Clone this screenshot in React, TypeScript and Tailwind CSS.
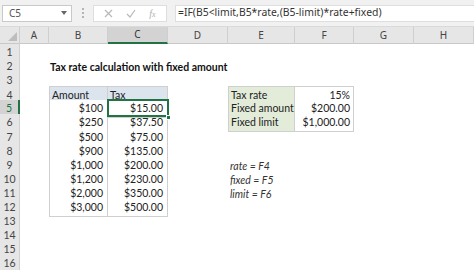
import React from "react";

const GRID = "grid grid-cols-[20px_29px_59px_60px_60px_67px_59px_60px_60px]";
const CELL_FONT = { fontFamily: "Lato, 'Noto Sans', sans-serif" };
const UI_FONT = { fontFamily: "'Noto Sans', 'Open Sans', sans-serif" };

type Cell = {
  text?: string;
  kind?: "title" | "head" | "num" | "label" | "val" | "italic" | "sel";
  border?: "t1top" | "t1" | "t2top" | "t2";
  left?: boolean;
};

const rows: Record<number, Record<string, Cell>> = {
  2: { B: { text: "Tax rate calculation with fixed amount", kind: "title" } },
  4: {
    B: { text: "Amount", kind: "head", border: "t1top", left: true },
    C: { text: "Tax", kind: "head", border: "t1top" },
    E: { text: "Tax rate", kind: "label", border: "t2top", left: true },
    F: { text: "15%", kind: "val", border: "t2top" },
  },
  5: {
    B: { text: "$100", kind: "num", border: "t1", left: true },
    C: { text: "$15.00", kind: "sel", border: "t1" },
    E: { text: "Fixed amount", kind: "label", border: "t2", left: true },
    F: { text: "$200.00", kind: "val", border: "t2" },
  },
  6: {
    B: { text: "$250", kind: "num", border: "t1", left: true },
    C: { text: "$37.50", kind: "num", border: "t1" },
    E: { text: "Fixed limit", kind: "label", border: "t2", left: true },
    F: { text: "$1,000.00", kind: "val", border: "t2" },
  },
  7: { B: { text: "$500", kind: "num", border: "t1", left: true }, C: { text: "$75.00", kind: "num", border: "t1" } },
  8: { B: { text: "$900", kind: "num", border: "t1", left: true }, C: { text: "$135.00", kind: "num", border: "t1" } },
  9: {
    B: { text: "$1,000", kind: "num", border: "t1", left: true },
    C: { text: "$200.00", kind: "num", border: "t1" },
    E: { text: "rate = F4", kind: "italic" },
  },
  10: {
    B: { text: "$1,200", kind: "num", border: "t1", left: true },
    C: { text: "$230.00", kind: "num", border: "t1" },
    E: { text: "fixed = F5", kind: "italic" },
  },
  11: {
    B: { text: "$2,000", kind: "num", border: "t1", left: true },
    C: { text: "$350.00", kind: "num", border: "t1" },
    E: { text: "limit = F6", kind: "italic" },
  },
  12: { B: { text: "$3,000", kind: "num", border: "t1", left: true }, C: { text: "$500.00", kind: "num", border: "t1" } },
};

const letters = ["A", "B", "C", "D", "E", "F", "G", "H"];

function CellView({ cell }: { cell?: Cell }) {
  if (!cell) return <div className="h-full" />;
  let border = "";
  if (cell.border === "t1top" || cell.border === "t2top") border = "border-t border-r border-b border-[#cfcfcf]";
  else if (cell.border === "t1" || cell.border === "t2") border = "border-r border-b border-[#cfcfcf]";
  const left = cell.left ? "border-l" : "";
  switch (cell.kind) {
    case "title":
      return (
        <div className="relative h-full">
          <span className="absolute left-[1px] top-[1px] h-full flex items-center whitespace-nowrap font-bold text-[10.5px] text-[#111]">
            {cell.text}
          </span>
        </div>
      );
    case "head":
      return (
        <div className={`h-full flex items-center pl-[2px] pt-[1px] bg-[#dce4ee] text-[10.5px] text-[#222] ${border} ${left}`}>{cell.text}</div>
      );
    case "label":
      return (
        <div className={`h-full flex items-center pl-[2px] pt-[1px] bg-[#e2ecd9] text-[10.5px] text-[#222] whitespace-nowrap ${border} ${left}`}>{cell.text}</div>
      );
    case "val":
      return (
        <div className={`h-full flex items-center justify-end pr-[3px] pt-[1px] bg-white text-[10.5px] text-[#222] whitespace-nowrap ${border}`}>{cell.text}</div>
      );
    case "num":
      return (
        <div className={`h-full flex items-center justify-end pr-[4px] pt-[1px] bg-white text-[10.5px] text-[#222] ${border} ${left}`}>{cell.text}</div>
      );
    case "sel":
      return (
        <div className={`relative h-full flex items-center justify-end pr-[4px] pt-[1px] bg-white text-[10.5px] text-[#222] ${border}`}>
          {cell.text}
          <div className="absolute left-[-1px] top-[-1px] right-[-2px] bottom-0 border-2 border-[#217346]" />
          <div className="absolute right-[-4px] bottom-[-3px] w-[5px] h-[5px] bg-[#217346] border border-white" />
        </div>
      );
    case "italic":
      return (
        <div className="relative h-full">
          <span className="absolute left-[2px] top-[1px] h-full flex items-center whitespace-nowrap italic text-[10.5px] text-[#333]">
            {cell.text}
          </span>
        </div>
      );
  }
  return <div className="h-full" />;
}

export default function App() {
  const rowNums = Array.from({ length: 16 }, (_, i) => i + 1);
  return (
    <div className="w-[474px] h-[270px] overflow-hidden bg-white flex flex-col">
      {/* Formula toolbar */}
      <div className="h-[27px] shrink-0 bg-[#f1f1f1] flex items-center pl-[2px] border-b border-[#dadada]" style={UI_FONT}>
        <div className="w-[70px] h-[17px] bg-white border border-[#c9c9c9] flex items-center justify-between pl-[6px] pr-[4px]">
          <span className="text-[10px] text-[#555]">C5</span>
          <svg width="6" height="4" viewBox="0 0 6 4"><path d="M0 0 L6 0 L3 4 Z" fill="#666" /></svg>
        </div>
        <div className="w-[21px] flex justify-center">
          <svg width="2" height="10" viewBox="0 0 2 10">
            <rect x="0" y="0" width="2" height="2" fill="#b4b4b4" />
            <rect x="0" y="4" width="2" height="2" fill="#b4b4b4" />
            <rect x="0" y="8" width="2" height="2" fill="#b4b4b4" />
          </svg>
        </div>
        <div className="w-[74px] h-[17px] bg-white border border-[#dedede] flex items-center justify-around px-[4px]">
          <svg width="9" height="9" viewBox="0 0 9 9"><path d="M1 1 L8 8 M8 1 L1 8" stroke="#b8b8b8" strokeWidth="1.2" /></svg>
          <svg width="10" height="9" viewBox="0 0 10 9"><path d="M1 5 L4 8 L9 1" stroke="#b8b8b8" strokeWidth="1.2" fill="none" /></svg>
          <span className="italic text-[10px] text-[#b0b0b0]" style={{ fontFamily: "'Liberation Serif', serif" }}>f<span className="text-[8px]">x</span></span>
        </div>
        <div className="ml-[8px] flex-1 h-[17px] bg-white border border-[#dedede] border-r-0 flex items-center pl-[2px]">
          <span className="text-[10.4px] text-[#333] whitespace-nowrap">=IF(B5&lt;limit,B5*rate,(B5-limit)*rate+fixed)</span>
        </div>
      </div>

      {/* Column headers */}
      <div className={`${GRID} h-[17px] shrink-0 bg-[#e6e6e6] border-b border-[#c8c8c8]`} style={UI_FONT}>
        <div className="relative border-r border-[#cfcfcf]">
          <svg className="absolute right-[2px] bottom-[3px]" width="9" height="9" viewBox="0 0 9 9">
            <path d="M9 0 L9 9 L0 9 Z" fill="#bdbdbd" />
          </svg>
        </div>
        {letters.map((l) =>
          l === "C" ? (
            <div key={l} className="flex items-center justify-center text-[10px] text-[#333] bg-[#d3d3d3] border-b-2 border-[#217346] border-r border-r-[#cfcfcf]">
              {l}
            </div>
          ) : (
            <div key={l} className="flex items-center justify-center text-[10px] text-[#444] border-r border-[#cfcfcf]">
              {l}
            </div>
          )
        )}
      </div>

      {/* Rows */}
      <div className="flex flex-col" style={CELL_FONT}>
        {rowNums.map((n) => {
          const r = rows[n] || {};
          return (
            <div key={n} className={`${GRID} h-[14.1px] shrink-0`}>
              {n === 5 ? (
                <div className="flex items-center justify-center pt-[1px] bg-[#d3d3d3] border-r-2 border-[#217346] border-b border-b-[#d0d0d0] text-[10.5px] text-[#217346]">
                  {n}
                </div>
              ) : (
                <div className="flex items-center justify-center pt-[1px] bg-[#e6e6e6] border-r border-b border-[#d0d0d0] text-[10.5px] text-[#444]">
                  {n}
                </div>
              )}
              {letters.map((l) => (
                <CellView key={l} cell={r[l]} />
              ))}
            </div>
          );
        })}
        <div className={`${GRID} flex-1`}>
          <div className="bg-[#e6e6e6] border-r border-[#d0d0d0]" />
        </div>
      </div>
    </div>
  );
}
